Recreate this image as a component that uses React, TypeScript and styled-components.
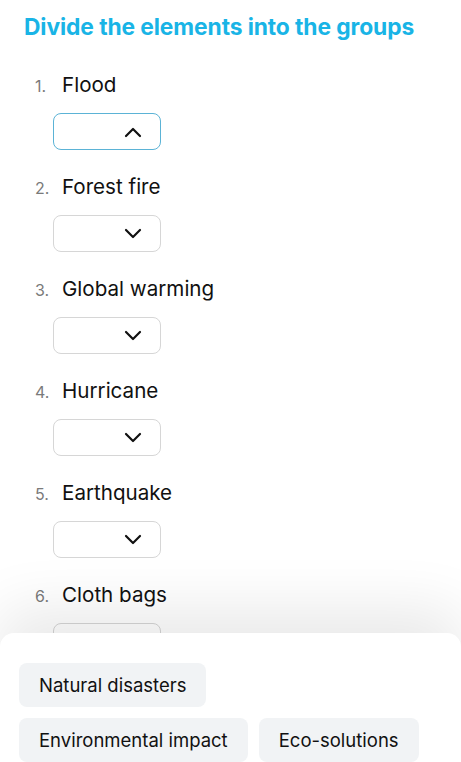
import styled, { createGlobalStyle } from "styled-components";

const GlobalStyle = createGlobalStyle`
  html, body {
    margin: 0;
    padding: 0;
    background: #ffffff;
    font-family: Inter, "Noto Sans", sans-serif;
    overflow: hidden;
  }
`;

const items = [
  "Flood",
  "Forest fire",
  "Global warming",
  "Hurricane",
  "Earthquake",
  "Cloth bags",
];

const groups = [["Natural disasters"], ["Environmental impact", "Eco-solutions"]];

const Chevron = ({ up }: { up?: boolean }) => (
  <svg width="20" height="12" viewBox="0 0 20 12" fill="none">
    <path
      d={up ? "M3 10 L10 3 L17 10" : "M3 2 L10 9 L17 2"}
      stroke="#111"
      strokeWidth="2.2"
      strokeLinecap="round"
      strokeLinejoin="round"
    />
  </svg>
);

const App = () => {
  return (
    <Page>
      <GlobalStyle />
      <Title>{"Divide the elements into the groups"}</Title>
      <List>
        {items.map((label, i) => (
          <Item key={label}>
            <ItemHead>
              <Num>{i + 1}.</Num>
              <Label>{label}</Label>
            </ItemHead>
            <Select $open={i === 0}>
              <Chevron up={i === 0} />
            </Select>
          </Item>
        ))}
      </List>
      <Sheet>
        {groups.map((row, r) => (
          <ChipRow key={r}>
            {row.map((g) => (
              <Chip key={g}>{g}</Chip>
            ))}
          </ChipRow>
        ))}
      </Sheet>
    </Page>
  );
};

export default App;

const Page = styled.div`
  position: relative;
  width: 461px;
  height: 762px;
  overflow: hidden;
  background: #fff;
`;

const Title = styled.h1`
  margin: 0;
  padding: 12px 0 0 24px;
  font-size: 22.8px;
  line-height: 30px;
  font-weight: 700;
  color: #19b4e6;
  letter-spacing: -0.1px;
`;

const List = styled.div`
  display: flex;
  flex-direction: column;
  gap: 24px;
  padding: 30px 0 0 35px;
`;

const Item = styled.div`
  display: flex;
  flex-direction: column;
  gap: 17px;
`;

const ItemHead = styled.div`
  display: flex;
  align-items: baseline;
  height: 24px;
`;

const Num = styled.span`
  width: 27px;
  font-size: 16px;
  color: #7a7a7a;
`;

const Label = styled.span`
  font-size: 20.6px;
  color: #111;
`;

const Select = styled.div<{ $open?: boolean }>`
  box-sizing: border-box;
  margin-left: 18px;
  width: 108px;
  height: 37px;
  border-radius: 8px;
  border: 1px solid ${(p) => (p.$open ? "#5bb3d6" : "#d6d6d6")};
  display: flex;
  align-items: center;
  justify-content: flex-end;
  padding-right: 17px;
`;

const Sheet = styled.div`
  position: absolute;
  left: 0;
  right: 0;
  top: 633px;
  bottom: 0;
  background: #fff;
  border-radius: 14px 14px 0 0;
  box-shadow: 0 -24px 60px rgba(0, 0, 0, 0.09);
  padding: 30px 19px 0;
  display: flex;
  flex-direction: column;
  gap: 11px;
`;

const ChipRow = styled.div`
  display: flex;
  gap: 11px;
`;

const Chip = styled.div`
  height: 44px;
  padding: 0 20px;
  display: flex;
  align-items: center;
  background: #f1f3f5;
  border-radius: 8px;
  font-size: 18.5px;
  color: #111;
`;
